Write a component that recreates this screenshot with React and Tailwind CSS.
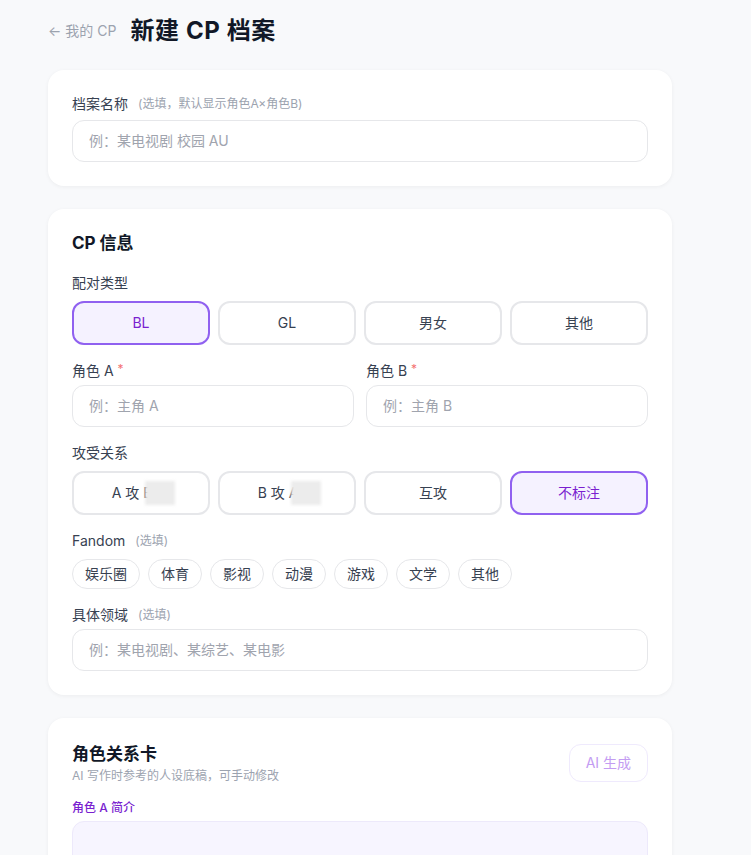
import { useState } from 'react';

const font = { fontFamily: 'Inter, "Noto Sans CJK SC", "Noto Sans", sans-serif' };

function Choice({ label, active, onClick, blurFrom }) {
  return (
    <button
      type="button"
      onClick={onClick}
      className={
        'h-[44px] rounded-xl border-2 text-sm transition-colors ' +
        (active
          ? 'border-[#9061f0] bg-[#f5f2ff] text-[#7a1fd0]'
          : 'border-[#e6e7ea] bg-white text-[#374151]')
      }
    >
      {blurFrom ? (
        <span>
          {label}{' '}
          <span className="relative">
            {blurFrom}
            <span className="absolute left-[2px] top-[-3px] h-[24px] w-[30px] bg-[#ececec] blur-[1.5px]" />
          </span>
        </span>
      ) : (
        label
      )}
    </button>
  );
}

function Label({ children, hint, required, className = '' }) {
  return (
    <div className={'flex items-center text-sm leading-5 text-[#374151] ' + className}>
      <span>{children}</span>
      {required && <span className="ml-1 self-start text-xs leading-4 text-[#f47272]">*</span>}
      {hint && <span className="ml-2.5 text-xs text-[#9ca3af]">{hint}</span>}
    </div>
  );
}

function Input({ placeholder }) {
  return (
    <input
      type="text"
      placeholder={placeholder}
      className="w-full rounded-xl border border-[#e6e7ea] bg-white px-4 py-2.5 text-sm leading-5 text-[#374151] outline-none placeholder:text-[#a0a4ae]"
    />
  );
}

export default function App() {
  const [pair, setPair] = useState('BL');
  const [rel, setRel] = useState('none');
  const [fandom, setFandom] = useState(null);

  const pairs = ['BL', 'GL', '男女', '其他'];
  const fandoms = ['娱乐圈', '体育', '影视', '动漫', '游戏', '文学', '其他'];

  return (
    <div className="min-h-screen bg-[#f8f9fb] px-12 pt-[15px] pb-10" style={font}>
      <div className="w-[624px]">
        <div className="mb-[23px] flex h-8 items-center gap-[14px]">
          <button type="button" className="text-sm text-[#9ca3af]">← 我的 CP</button>
          <h1 className="text-2xl font-bold tracking-wide text-[#111827]">新建 CP 档案</h1>
        </div>

        <div className="flex flex-col gap-[23px]">
          <div className="rounded-2xl bg-white p-6 shadow-[0_1px_4px_rgba(0,0,0,0.05)]">
            <Label hint="(选填，默认显示角色A×角色B)" className="mb-1.5">档案名称</Label>
            <Input placeholder="例：某电视剧 校园 AU" />
          </div>

          <div className="rounded-2xl bg-white p-6 shadow-[0_1px_4px_rgba(0,0,0,0.05)]">
            <h2 className="mb-5 text-[17px] font-bold leading-5 text-[#111827]">CP 信息</h2>

            <div className="flex flex-col gap-4">
              <div>
                <Label className="mb-2">配对类型</Label>
                <div className="grid grid-cols-4 gap-2">
                  {pairs.map((p) => (
                    <Choice key={p} label={p} active={pair === p} onClick={() => setPair(p)} />
                  ))}
                </div>
              </div>

              <div className="grid grid-cols-2 gap-3">
                <div>
                  <Label required className="mb-1">角色 A</Label>
                  <Input placeholder="例：主角 A" />
                </div>
                <div>
                  <Label required className="mb-1">角色 B</Label>
                  <Input placeholder="例：主角 B" />
                </div>
              </div>

              <div>
                <Label className="mb-2">攻受关系</Label>
                <div className="grid grid-cols-4 gap-2">
                  <Choice label="A 攻" blurFrom="B 受" active={rel === 'a'} onClick={() => setRel('a')} />
                  <Choice label="B 攻" blurFrom="A 受" active={rel === 'b'} onClick={() => setRel('b')} />
                  <Choice label="互攻" active={rel === 'both'} onClick={() => setRel('both')} />
                  <Choice label="不标注" active={rel === 'none'} onClick={() => setRel('none')} />
                </div>
              </div>

              <div>
                <Label hint="(选填)" className="mb-2">Fandom</Label>
                <div className="flex flex-wrap gap-2">
                  {fandoms.map((f) => (
                    <button
                      key={f}
                      type="button"
                      onClick={() => setFandom(f)}
                      className={
                        'rounded-full border px-3 py-1 text-sm leading-5 ' +
                        (fandom === f
                          ? 'border-[#9061f0] bg-[#f5f2ff] text-[#7a1fd0]'
                          : 'border-[#e6e7ea] bg-white text-[#374151]')
                      }
                    >
                      {f}
                    </button>
                  ))}
                </div>
              </div>

              <div>
                <Label hint="(选填)" className="mb-1">具体领域</Label>
                <Input placeholder="例：某电视剧、某综艺、某电影" />
              </div>
            </div>
          </div>

          <div className="rounded-2xl bg-white p-6 shadow-[0_1px_4px_rgba(0,0,0,0.05)]">
            <div className="flex items-center justify-between">
              <div>
                <h2 className="text-[17px] font-bold leading-6 text-[#111827]">角色关系卡</h2>
                <p className="mt-0.5 text-xs leading-4 text-[#9ca3af]">AI 写作时参考的人设底稿，可手动修改</p>
              </div>
              <button
                type="button"
                className="rounded-xl border border-[#efeafd] bg-white px-4 py-2 text-sm leading-5 text-[#c39cf2]"
              >
                AI 生成
              </button>
            </div>
            <div className="mt-4 mb-[5px] text-xs font-medium leading-4 text-[#7a1fd0]">角色 A 简介</div>
            <textarea
              rows={5}
              className="w-full resize-none rounded-xl border border-[#ede9fb] bg-[#f7f5ff] px-4 py-3 text-sm text-[#374151] outline-none"
            />
          </div>
        </div>
      </div>
    </div>
  );
}
